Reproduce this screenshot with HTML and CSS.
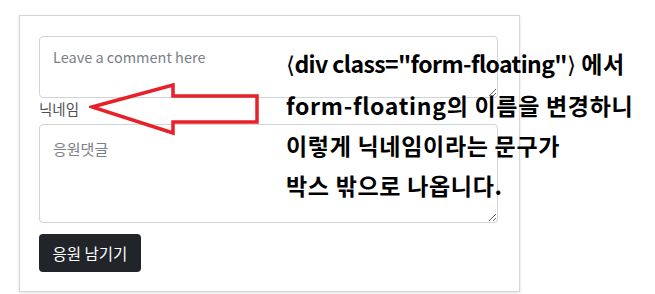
FILE: index.html
```html
<!DOCTYPE html>
<html>
<head>
  <title>응원 댓글</title>
  <link rel="stylesheet" href="styles.css">
</head>
<body>
  <div class="card">
    <textarea class="comment-box" placeholder="Leave a comment here"></textarea>
    <label class="nick-label">닉네임</label>
    <textarea class="cheer-box" placeholder="응원댓글"></textarea>
    <button class="btn-submit">응원 남기기</button>
  </div>

  <svg class="arrow" width="180" height="60" viewBox="0 0 180 60">
    <polygon points="3,24 84,2 84,13 168,13 168,39 84,39 84,50" fill="none" stroke="#e8202a" stroke-width="3.5" stroke-linejoin="miter"/>
  </svg>

  <p class="note">
    <span class="latin"><span class="bracket">⟨</span>div class="form-floating"<span class="bracket">⟩</span></span> 에서<br>
    form-floating의 이름을 변경하니<br>
    이렇게 닉네임이라는 문구가<br>
    박스 밖으로 나옵니다.
  </p>
</body>
</html>
```

FILE: styles.css
```css
body {
  margin: 0;
  background: #ffffff;
  font-family: "Noto Sans CJK KR", "Noto Sans", sans-serif;
  width: 655px;
  height: 294px;
  overflow: hidden;
  position: relative;
}
.card {
  margin: 15px 0 0 19px;
  width: 460px;
  padding: 20px 20px 19px 19px;
  border: 1px solid #d6d6d6;
  box-shadow: 0 1px 3px rgba(0, 0, 0, 0.12);
  display: flex;
  flex-direction: column;
  align-items: flex-start;
}
textarea {
  width: 459px;
  box-sizing: border-box;
  border: 1px solid #ced4da;
  border-radius: 4px;
  padding: 9px 13px;
  font-family: "Noto Sans CJK KR", "Noto Sans", sans-serif;
  font-size: 15px;
  color: #212529;
}
textarea::placeholder {
  color: #7b8088;
}
.comment-box {
  height: 62px;
  font-size: 14.5px;
}
.nick-label {
  font-size: 14.5px;
  color: #4b5056;
  height: 26px;
  line-height: 21px;
}
.cheer-box {
  height: 99px;
  padding-top: 13px;
}
.btn-submit {
  margin-top: 11px;
  height: 38px;
  width: 102px;
  background: #212529;
  color: #ffffff;
  border: none;
  border-radius: 4px;
  font-family: "Noto Sans CJK KR", "Noto Sans", sans-serif;
  font-size: 15.5px;
}
.arrow {
  position: absolute;
  left: 89px;
  top: 83px;
}
.note {
  position: absolute;
  left: 286px;
  top: 43px;
  margin: 0;
  font-size: 23px;
  font-weight: bold;
  line-height: 40px;
  letter-spacing: 0.7px;
  color: #000;
}
.latin {
  letter-spacing: -0.6px;
}
.bracket {
  font-family: "DejaVu Sans", sans-serif;
  font-weight: normal;
}
```
